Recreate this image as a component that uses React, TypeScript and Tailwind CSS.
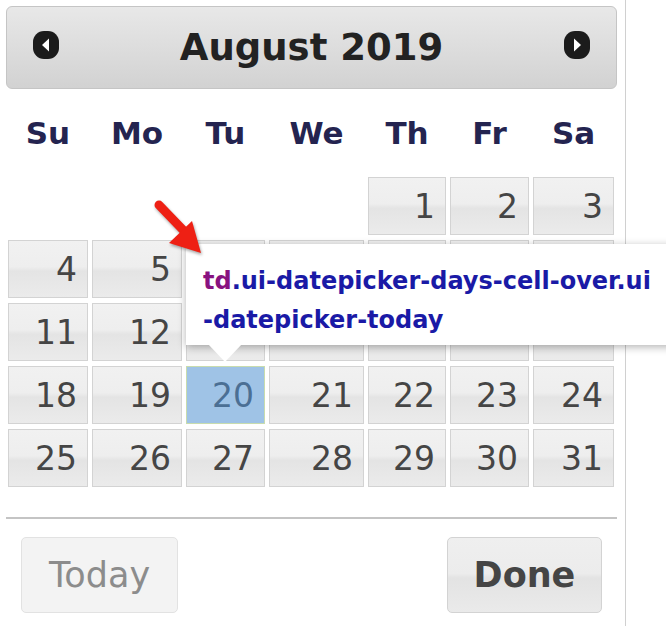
const weekdays = ['Su', 'Mo', 'Tu', 'We', 'Th', 'Fr', 'Sa'];

// August 2019 starts on a Thursday
const cells: (number | null)[] = [null, null, null, null, ...Array.from({ length: 31 }, (_, i) => i + 1)];

function NavIcon({ dir }: { dir: 'prev' | 'next' }) {
  return (
    <svg width="26" height="28" viewBox="0 0 26 28">
      <rect x="0" y="0" width="26" height="28" rx="11" fill="#1b1b1b" />
      {dir === 'prev' ? (
        <polygon points="9,14 16,7.5 16,20.5" fill="#fff" />
      ) : (
        <polygon points="17,14 10,7.5 10,20.5" fill="#fff" />
      )}
    </svg>
  );
}

function DayCell({ day }: { day: number | null }) {
  if (day === null) return <div />;
  const today = day === 20;
  return (
    <div
      className={
        today
          ? 'flex items-center justify-end pr-[10px] border border-[#c8dcae] bg-[#9fc3e6] text-[#4b6f94]'
          : 'flex items-center justify-end pr-[10px] border border-[#d3d3d3] bg-[linear-gradient(#f1f1f1_0%,#eeeeee_46%,#e4e4e4_54%,#ebebeb_100%)] text-[#454545]'
      }
    >
      <span className="text-[33px] leading-none">{day}</span>
    </div>
  );
}

export default function App() {
  return (
    <div className="relative w-[666px] h-[626px] bg-white overflow-hidden font-['DejaVu_Sans',sans-serif]">
      <div className="w-[626px] h-full border-r border-[#d0d0d0] pl-[6px] pt-[6px]">
        {/* header */}
        <div className="relative w-[611px] h-[83px] rounded-[6px] border border-[#c5c5c5] bg-[linear-gradient(#e8e8e8,#d2d2d2)] flex items-center justify-center">
          <div className="absolute left-[26px] top-[24px]">
            <NavIcon dir="prev" />
          </div>
          <span className="text-[37px] font-bold text-[#222] leading-none">August 2019</span>
          <div className="absolute right-[26px] top-[24px]">
            <NavIcon dir="next" />
          </div>
        </div>

        {/* weekdays */}
        <div className="ml-[2px] w-[606px] h-[88px] grid grid-cols-[80px_90px_79px_95px_78px_79px_81px] gap-x-[4px] items-center">
          {weekdays.map((d) => (
            <div key={d} className="text-center text-[31px] font-bold text-[#242450] leading-none">
              {d}
            </div>
          ))}
        </div>

        {/* days */}
        <div className="ml-[2px] w-[606px] grid grid-cols-[80px_90px_79px_95px_78px_79px_81px] auto-rows-[58px] gap-x-[4px] gap-y-[5px]">
          {cells.map((d, i) => (
            <DayCell key={i} day={d} />
          ))}
        </div>

        <div className="mt-[30px] w-[611px] h-[2px] bg-[#c4c4c4]" />

        {/* buttons */}
        <div className="mt-[18px] w-[611px] flex justify-between px-[15px]">
          <button className="w-[157px] h-[76px] rounded-[5px] border border-[#e2e2e2] bg-[#f3f3f3] text-[35px] text-[#8c8c8c] leading-none">
            Today
          </button>
          <button className="w-[155px] h-[76px] rounded-[5px] border border-[#d3d3d3] bg-[linear-gradient(#efefef_0%,#ececec_48%,#e3e3e3_54%,#eaeaea_100%)] text-[35px] font-bold text-[#454545] leading-none">
            Done
          </button>
        </div>
      </div>

      {/* devtools tooltip */}
      <div className="absolute left-[186px] top-[244px] w-[520px] h-[101px] bg-white shadow-[0_2px_8px_rgba(0,0,0,0.3)] pl-[17px] pt-[18px] font-['DejaVu_Sans',sans-serif] font-bold text-[24px] leading-[39px] text-[#1a1aa6] whitespace-nowrap">
        <span className="text-[#881280]">td</span>.ui-datepicker-days-cell-over.ui
        <br />
        -datepicker-today
        <svg className="absolute left-[22px] top-[100px]" width="34" height="20" viewBox="0 0 34 20">
          <polygon points="0,0 34,0 17,18" fill="#fff" />
        </svg>
      </div>

      {/* red arrow */}
      <svg className="absolute left-[145px] top-[192px]" width="70" height="70" viewBox="0 0 70 70">
        <g style={{ filter: 'drop-shadow(1px 2px 1.5px rgba(0,0,0,0.35))' }}>
          <line x1="14" y1="13" x2="40" y2="40" stroke="#ee2014" strokeWidth="9" strokeLinecap="round" />
          <polygon points="24,51 47,29 56,61" fill="#ee2014" />
        </g>
      </svg>
    </div>
  );
}
